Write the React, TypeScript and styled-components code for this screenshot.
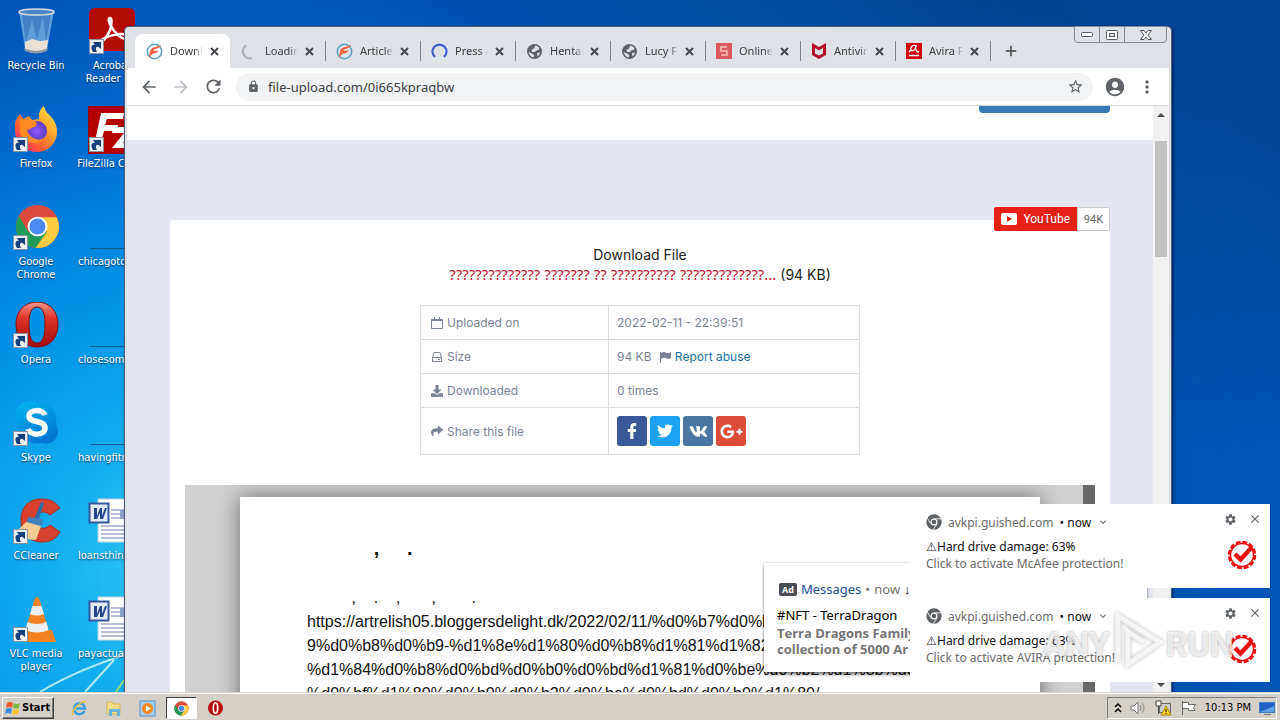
import React from "react";
import styled, { createGlobalStyle } from "styled-components";
import { MdArrowBack, MdArrowForward, MdRefresh, MdLock, MdStarOutline, MdAccountCircle, MdMoreVert, MdSettings, MdClose, MdExpandMore, MdAdd } from "react-icons/md";
import { FaFacebookF, FaTwitter, FaVk, FaShare, FaDownload, FaGooglePlusG } from "react-icons/fa";

const ui = '"DejaVu Sans Condensed", "DejaVu Sans", sans-serif';
const chromeUi = '"Noto Sans", "Open Sans", sans-serif';

const GlobalStyle = createGlobalStyle`
  * { box-sizing: border-box; }
  body { margin: 0; font-family: ${chromeUi}; }
  button { margin: 0; padding: 0; border: 0; background: none; color: inherit; font: inherit; }
  svg { display: block; flex: none; }
  a { text-decoration: none; }
`;

const Screen = styled.div`
  height: 100vh;
  display: flex;
  flex-direction: column;
  overflow: hidden;
`;

const Desktop = styled.main`
  position: relative;
  flex: 1;
  min-height: 0;
  overflow: hidden;
  background:
    linear-gradient(30deg, transparent 65%, rgba(0, 40, 80, 0.35) 90%),
    radial-gradient(circle at 190px 570px, #36cdf4 0, #12adee 140px, #0090e6 300px, #0068cc 460px, #0050b0 620px, #0059b4 760px, #0052ae 960px, #0057ba 1120px);
`;

const Rays = styled.svg`
  position: absolute;
  left: 0;
  bottom: 0;
`;

const IconGrid = styled.div`
  position: relative;
  display: grid;
  grid-template-rows: repeat(7, 98px);
  grid-auto-columns: 72px;
  grid-auto-flow: column;
  column-gap: 4px;
`;

const Shortcut = styled.button<{ $long?: boolean }>`
  display: flex;
  flex-direction: column;
  align-items: center;
  justify-content: flex-start;
  padding-top: 8px;
  gap: 3px;
  color: #fff;
  font: 11px/13px ${ui};
  text-shadow: 0 1px 2px #00305c;
  span {
    width: 100%;
    padding-left: ${(p) => (p.$long ? "2px" : "0")};
    text-align: ${(p) => (p.$long ? "left" : "center")};
    white-space: pre;
  }
`;

const Window = styled.section`
  position: absolute;
  left: 124px;
  right: 108px;
  top: 26px;
  bottom: 0;
  display: flex;
  flex-direction: column;
  border: solid #52617f;
  border-width: 1px 1px 0;
  border-radius: 5px 5px 0 0;
  background: #dee1e6;
  padding: 0 2px;
  box-shadow: 1px 1px 3px rgba(0, 10, 50, 0.7);
`;

const TabStrip = styled.div`
  display: flex;
  height: 41px;
  padding: 7px 0 0 8px;
`;

const Tab = styled.div<{ $active?: boolean }>`
  width: 95px;
  display: flex;
  align-items: center;
  padding: 0 9px 0 11px;
  border-radius: 8px 8px 0 0;
  background: ${(p) => (p.$active ? "#fff" : "transparent")};
`;

const TabTitle = styled.button`
  flex: 1;
  min-width: 0;
  margin-left: 7px;
  overflow: hidden;
  text-align: left;
  white-space: nowrap;
  font-size: 11px;
  line-height: 16px;
  color: #3c4043;
  mask-image: linear-gradient(90deg, #000 75%, transparent);
`;

const TabClose = styled.button`
  width: 14px;
  height: 14px;
  margin-left: 4px;
  display: grid;
  place-items: center;
  color: #45494d;
`;

const Divider = styled.i`
  width: 1px;
  height: 20px;
  margin: 7px -1px 0 0;
  background: #80868b;
`;

const NewTab = styled.button`
  width: 42px;
  display: grid;
  place-items: center;
  color: #3c4043;
`;

const Caption = styled.div`
  position: absolute;
  right: 4px;
  top: -1px;
  display: flex;
  border: 1px solid #858c98;
  border-radius: 0 0 4px 4px;
  button {
    width: 25px;
    height: 15px;
    display: grid;
    place-items: center;
    border-right: 1px solid #858c98;
  }
  button:last-child { width: 41px; border: 0; }
`;

const Toolbar = styled.form`
  display: flex;
  align-items: center;
  height: 38px;
  padding: 0 6px;
  background: #fff;
  border-bottom: 1px solid #d5d8dc;
  color: #5f6368;
`;

const ToolButton = styled.button`
  width: 32px;
  height: 28px;
  display: grid;
  place-items: center;
`;

const Omnibox = styled.label`
  flex: 1;
  display: flex;
  align-items: center;
  height: 28px;
  margin: 0 6px 0 7px;
  padding: 0 9px 0 11px;
  border-radius: 14px;
  background: #f1f3f4;
`;

const Address = styled.input`
  flex: 1;
  min-width: 0;
  margin-left: 8px;
  padding: 0;
  border: 0;
  outline: 0;
  font: 13px/20px ${chromeUi};
  color: #3c4043;
  background: none;
`;

const Viewport = styled.div`
  flex: 1;
  min-height: 0;
  display: flex;
  overflow: hidden;
  background: #fff;
`;

const Page = styled.div`
  position: relative;
  flex: 1;
  min-width: 0;
  overflow: hidden;
  background: #e4e7f2;
  font-family: Inter, "Open Sans", sans-serif;
`;

const Scrollbar = styled.div`
  width: 16px;
  display: flex;
  flex-direction: column;
  align-items: center;
  padding: 7px 0 5px;
  background: #f1f1f1;
`;

const Thumb = styled.div`
  width: 12px;
  height: 116px;
  margin: 24px 0 auto;
  background: #c1c1c1;
`;

const SiteHeader = styled.header`
  height: 34px;
  background: #fff;
`;

const Center = styled.div`
  width: 100%;
  max-width: 940px;
  margin: 0 auto;
`;

const UploadButton = styled.button`
  display: block;
  width: 131px;
  height: 7px;
  margin-left: auto;
  border-radius: 0 0 4px 4px;
  background: #337ab7;
`;

const Card = styled.article`
  position: relative;
  max-width: 940px;
  margin: 80px auto 0;
  padding: 25px 15px 0;
  border-radius: 3px;
  background: #fff;
`;

const YouTube = styled.div`
  position: absolute;
  right: 0;
  top: -13px;
  height: 24px;
  display: flex;
  border-radius: 2px;
  overflow: hidden;
  font: 12px/24px Roboto, sans-serif;
  a {
    display: flex;
    align-items: center;
    gap: 6px;
    padding: 0 7px;
    background: #e62117;
    color: #fff;
  }
  span {
    width: 33px;
    border: 1px solid #ccc;
    background: #fff;
    color: #666;
    font-size: 11px;
    line-height: 23px;
    text-align: center;
  }
`;

const Title = styled.h1`
  margin: 0 0 20px;
  font-size: 14px;
  font-weight: 400;
  line-height: 20px;
  text-align: center;
  color: #222;
`;

const FileName = styled.span`
  font: 15px/1 "Noto Sans", sans-serif;
  color: #c8102e;
`;

const Info = styled.table`
  width: 440px;
  margin: 0 auto 30px;
  border-collapse: collapse;
  font-size: 12px;
  line-height: 17px;
  color: #7b8398;
  th, td {
    padding: 8px;
    border: 1px solid #ddd;
    font-weight: 400;
    text-align: left;
  }
  th { width: 188px; padding-left: 10px; }
  a { color: #1b6f9f; }
`;

const Line = styled.div`
  display: flex;
  align-items: center;
  gap: 4px;
`;

const ShareRow = styled.div`
  display: flex;
  gap: 3px;
`;

const Share = styled.button<{ $color: string }>`
  width: 30px;
  height: 30px;
  display: grid;
  place-items: center;
  border-radius: 3px;
  background: ${(p) => p.$color};
  color: #fff;
`;

const Viewer = styled.div`
  position: relative;
  padding-top: 12px;
  background: #d1d1d1;
  overflow: hidden;
`;

const ViewerBar = styled.div`
  position: absolute;
  right: 0;
  top: 0;
  bottom: 0;
  width: 12px;
  background: #686868;
`;

const Paper = styled.div`
  max-width: 800px;
  height: 1000px;
  margin: 0 auto;
  padding: 39px 67px;
  background: #fff;
  box-shadow: 0 0 20px rgba(0, 0, 0, 0.5);
  font: 16px/24px "Liberation Sans", Arial, sans-serif;
  color: #111;
  white-space: pre;
  p { margin: 0; }
`;

const Heading = styled.p`
  font-size: 20px;
  font-weight: 700;
  && { padding-bottom: 26px; }
`;

const AdCard = styled.aside`
  position: absolute;
  right: 6px;
  bottom: 20px;
  width: 383px;
  height: 109px;
  padding: 16px 13px;
  background: #fff;
  box-shadow: 0 3px 4px -1px rgba(0, 0, 0, 0.6), 0 0 2px rgba(0, 0, 0, 0.25);
  font: 13px/16px "Noto Sans", sans-serif;
  color: #000;
  white-space: nowrap;
  strong { display: block; padding-top: 2px; color: #757575; font-family: "Open Sans", sans-serif; }
`;

const AdTop = styled.div`
  display: flex;
  align-items: center;
  gap: 4px;
  height: 20px;
  margin-bottom: 8px;
  color: #757575;
  a { color: #1a4f91; }
  b { padding: 0 3px; margin-left: 2px; border-radius: 2px; background: #4a4d55; color: #fff; font-size: 9px; line-height: 13px; }
  i { font-style: normal; color: #000; }
`;

const Notifications = styled.div`
  position: absolute;
  right: 10px;
  bottom: 10px;
  width: 360px;
  display: flex;
  flex-direction: column;
  gap: 10px;
`;

const Notice = styled.section`
  display: flex;
  height: 84px;
  padding: 8px 8px 0 16px;
  background: #fff;
  font: 12px/17px "Noto Sans", sans-serif;
  color: #6b6b6b;
`;

const NoticeText = styled.div`
  flex: 1;
  p { margin: 0; }
`;

const Source = styled.div`
  display: flex;
  align-items: center;
  gap: 6px;
  height: 20px;
  margin-bottom: 6px;
`;

const Dark = styled.span`
  color: #111;
`;

const NoticeSide = styled.div`
  width: 40px;
  display: flex;
  flex-direction: column;
  align-items: center;
  gap: 14px;
`;

const NoticeButtons = styled.div`
  display: flex;
  gap: 11px;
  align-self: flex-end;
  color: #5f6368;
`;

const Watermark = styled.div`
  position: absolute;
  right: 46px;
  bottom: 16px;
  display: flex;
  align-items: center;
  font: 700 34px/64px Roboto, sans-serif;
  color: rgba(255, 255, 255, 0.75);
  text-shadow: 0 0 3px rgba(0, 0, 0, 0.35);
  pointer-events: none;
  svg { filter: drop-shadow(0 0 2px rgba(0, 0, 0, 0.35)); }
`;

const Taskbar = styled.footer`
  display: flex;
  align-items: center;
  height: 28px;
  padding: 3px 3px 0 2px;
  border-top: 1px solid #d4d0c8;
  box-shadow: inset 0 1px #fff;
  background: #d4cfc7;
`;

const Start = styled.button`
  display: flex;
  align-items: center;
  gap: 1px;
  width: 52px;
  height: 22px;
  margin-right: 10px;
  padding-left: 2px;
  border: 1px solid;
  border-color: #fff #404040 #404040 #fff;
  box-shadow: inset -1px -1px #808080;
  font: 700 11px/18px ${ui};
  color: #000;
`;

const Task = styled.button<{ $active?: boolean }>`
  width: 31px;
  height: 22px;
  margin-right: 3px;
  display: grid;
  place-items: center;
  border: 1px solid;
  border-color: ${(p) => (p.$active ? "#404040 #fff #fff #404040" : "transparent")};
  background: ${(p) => (p.$active ? "#fff" : "none")};
`;

const Tray = styled.div`
  display: flex;
  align-items: center;
  gap: 8px;
  height: 22px;
  margin-left: auto;
  padding: 0 1px 0 6px;
  border: 1px solid;
  border-color: #808080 #fff #fff #808080;
  font: 11px/18px ${ui};
  color: #000;
`;

const ShortcutArrow = () => (
  <g>
    <rect x="1.5" y="31.5" width="14" height="14" fill="#e9eef5" stroke="#8a94a5" />
    <path d="M5 44 C2 39 4 36 7 37 L5 34 L13 34 L13 41 L10.500 39 C8 38 7 41 9 44 Z" fill="#173f7c" />
  </g>
);

const ChromeLogo = ({ size = 16, mono = false }: { size?: number; mono?: boolean }) => (
  <svg width={size} height={size} viewBox="0 0 48 48">
    <circle cx="24" cy="24" r="23" fill={mono ? "#5f6368" : "#dd4b3e"} />
    {!mono && <path d="M4.1 12.5 A23 23 0 0 0 22 46.900 L34 29.5 L24 34 L14 29.5 Z" fill="#1f9d57" />}
    {!mono && <path d="M44.5 14 H24 L34 29.5 L22 46.900 A23 23 0 0 0 44.5 14 Z" fill="#ffcd41" />}
    {mono && <path d="M4 12 L14.5 29.5 M45 14.5 H24 M22 47 L33 29.5" stroke="#fff" strokeWidth="2.5" />}
    <circle cx="24" cy="24" r="10.5" fill="#fff" />
    <circle cx="24" cy="24" r={mono ? 7 : 8.5} fill={mono ? "#5f6368" : "#4a8af4"} />
  </svg>
);

const Pic = ({ children, arrow = true }: { children?: React.ReactNode; arrow?: boolean }) => (
  <svg width="48" height="48" viewBox="0 0 48 48">
    {children}
    {arrow && <ShortcutArrow />}
  </svg>
);

const BinIcon = () => (
  <Pic arrow={false}>
    <path d="M7 3 L13 41 Q24 47 35 41 L42 3 Z" fill="#7db4e4" opacity="0.75" />
    <path d="M10 6 L14 34 L20 12 L25 32 L31 8 L34 34 L39 6" fill="#2d6fb8" opacity="0.6" />
    <path d="M13 34 L20 31 L28 33 L36 32 L35 41 Q24 47 13 41 Z" fill="#e7dfd4" />
    <path d="M12 40 Q24 46 36 40 L35 43 Q24 48 13 43 Z" fill="#8d99a5" />
    <ellipse cx="24.5" cy="4" rx="17.5" ry="3" fill="#4a87c4" stroke="#d5dde5" strokeWidth="1.5" />
  </Pic>
);

const FirefoxIcon = () => (
  <Pic>
    <defs>
      <linearGradient id="fx" x1="1" y1="0" x2="0.1" y2="1">
        <stop offset="0" stopColor="#fff14a" /><stop offset="0.4" stopColor="#ffa52a" /><stop offset="0.7" stopColor="#ff5a36" /><stop offset="1" stopColor="#e8257a" />
      </linearGradient>
      <radialGradient id="fxc"><stop offset="0" stopColor="#9059ff" /><stop offset="1" stopColor="#5b3cc4" /></radialGradient>
    </defs>
    <path d="M3 25 C2 18 4 12 8 8 L11 13 L17 10 L20 14 L27 13 C26 8 28 3 32 0 C33 6 37 8 41 13 C51 28 41 46 25 46 C13 46 4 38 3 25 Z" fill="url(#fx)" />
    <circle cx="25" cy="25" r="10" fill="url(#fxc)" />
    <path d="M8 13 L20 14 C26 15 26 20 22 21 C18 22 18 24 15 24 C18 33 27 36 34 31 C29 40 13 39 8 27 Z" fill="#ff8a24" />
  </Pic>
);

const OperaIcon = () => (
  <Pic>
    <defs><linearGradient id="op" x1="0" y1="0" x2="0" y2="1"><stop offset="0" stopColor="#f29a90" /><stop offset="0.35" stopColor="#df3327" /><stop offset="1" stopColor="#a20b08" /></linearGradient></defs>
    <path fillRule="evenodd" d="M25 0 C12 0 4 10 4 22 C4 36 12 45 25 45 C38 45 46 36 46 22 C46 10 38 0 25 0 Z M25 5 C31 5 33 12 33 22 C33 34 31 41 25 41 C19 41 17 34 17 22 C17 12 19 5 25 5 Z" fill="url(#op)" stroke="#8b0d08" />
  </Pic>
);

const SkypeIcon = () => (
  <Pic>
    <defs><linearGradient id="sk" x1="0" y1="0" x2="0.5" y2="1"><stop offset="0" stopColor="#00b8ee" /><stop offset="1" stopColor="#0078d2" /></linearGradient></defs>
    <path d="M14 2 C20 0 22 3 27 3 C39 3 46 12 44 24 C50 34 42 47 30 43 C14 46 3 34 5 20 C1 12 7 3 14 2 Z" fill="url(#sk)" />
    <path d="M33 15 C31 9 17 9 17 16 C17 24 33 19 33 28 C33 36 18 36 16 29" fill="none" stroke="#fff" strokeWidth="5.5" />
  </Pic>
);

const CCleanerIcon = () => (
  <Pic>
    <path d="M48 10 C42 2 36 1 29 1 C16 1 9 10 9 22 C9 36 18 44 30 44 C38 44 44 41 48 34 L38 27 C33 33 23 31 23 22 C23 13 33 12 38 17 Z" fill="#d8412f" stroke="#a83022" />
    <path d="M29 4 L32 5 L26 24 L22 22 Z" fill="#2d6da8" />
    <path d="M16 19 L31 21 L30 28 L15 25 Z" fill="#3f83be" />
    <path d="M14 24 L29 28 L24 42 Q12 42 4 34 Z" fill="#f5cd93" />
  </Pic>
);

const VlcIcon = () => (
  <Pic>
    <path d="M10 34 H40 L44 46 H14 Z" fill="#f58220" />
    <path d="M23 2 Q25 0 27 2 L38 39 Q25 46 12 39 Z" fill="#f58220" />
    <path d="M20.5 10 H29.5 L32 18 Q25 21 18 18 Z M15.5 26 Q25 30 34.5 26 L36.5 34 Q25 39 13.5 34 Z" fill="#eceff1" />
  </Pic>
);

const AcrobatIcon = () => (
  <Pic>
    <rect x="1" y="0" width="46" height="43" rx="6" fill="#b30b00" />
    <path d="M22 10 C18 11 24 22 31 28 C37 33 42 30 38 27 C32 24 16 29 12 33 C11 37 18 32 22 22 C24 15 24 10 22 10 Z" fill="none" stroke="#fff" strokeWidth="2.5" />
  </Pic>
);

const FileZillaIcon = () => (
  <Pic>
    <rect width="48" height="48" fill="#b50000" stroke="#7b1010" strokeWidth="2" strokeDasharray="3 2" />
    <path d="M13 7 H36 L35 13 H19 L17 19 H30 L29 25 H16 L12 40 H6 Z M25 21 H46 L35 37 H46 V42 H24 L36 27 H24 Z" fill="#fff" />
  </Pic>
);

const WordIcon = () => (
  <Pic arrow={false}>
    <path d="M10 1 H47 V44 H10 Z" fill="#fff" stroke="#c6d0de" />
    <path d="M23 12 H45 M23 16 H45 M23 20 H45 M13 28 H45 M13 32 H45 M13 36 H45 M13 40 H45" stroke="#6c7ba8" />
    <rect x="32" y="12" width="12" height="9" fill="#8da2c9" />
    <rect x="1.5" y="5.5" width="19" height="19" fill="#e3ebf8" stroke="#33569d" strokeWidth="2" />
    <path d="M4 10 H9 L9 18 L12 10 H14 L14 18 L17 10 H19 L15 21 H12 L12 15 L9 21 H6 L6 10 Z" fill="#25468f" />
  </Pic>
);

const BlankIcon = () => <Pic arrow={false}><path d="M2 44.5 H48" stroke="#0b5a8c" /></Pic>;

const UploadMark = () => (
  <svg width="17" height="17" viewBox="0 0 17 17">
    <circle cx="8.5" cy="8.5" r="7.2" fill="none" stroke="#5a9fc4" strokeWidth="1.5" />
    <path d="M2.500 15.500 L4.500 7 Q5.500 4.500 9 4 L15.500 2 Q14 5 11 5.500 L8 6.500 L7.500 8 L12.500 7.500 Q11 10.500 7 10.500 Q5 12 2.500 15.500 Z" fill="#f4603f" />
  </svg>
);

const LoadMark = ({ color, blue }: { color: string; blue?: boolean }) => (
  <svg width="17" height="17" viewBox="0 0 17 17">
    <path d={blue ? "M4 14 A7 7 0 1 1 13 14" : "M5 2.5 A7 7 0 0 0 11 15"} fill="none" stroke={color} strokeWidth="2.2" />
  </svg>
);

const GlobeMark = () => (
  <svg width="17" height="17" viewBox="0 0 17 17">
    <circle cx="8.5" cy="8.5" r="7.5" fill="#5f6368" />
    <path d="M9.500 2.500 Q12 3 13.500 5 L12.500 7 L10 7.500 L9 9 H6 L5.500 7 L8 5.500 Z M2.500 9 L6 10.500 L8 12 V14.500 Q4 14 2.500 9 Z M11 10 L14 9.500 Q13.500 12 11.500 13.500 Z" fill="#dee1e6" />
  </svg>
);

const SquareMark = () => (
  <svg width="16" height="16" viewBox="0 0 16 16">
    <rect width="16" height="16" fill="#dc5964" />
    <path d="M11 4 H5 V8 H11 V12 H5" fill="none" stroke="#f5a6a6" strokeWidth="2" />
  </svg>
);

const McAfeeMark = () => (
  <svg width="16" height="16" viewBox="0 0 16 16">
    <path d="M1 0 L8 4 L15 0 V12 L8 16 L1 12 Z M4 5 V10.5 L8 12.5 L12 10.5 V5 L8 7.5 Z" fill="#b3122d" fillRule="evenodd" />
  </svg>
);

const AviraMark = () => (
  <svg width="16" height="16" viewBox="0 0 16 16">
    <rect width="16" height="16" fill="#d5000f" />
    <path d="M11 3 C6 1 4 5 5 7 C7 9 10 6 10 3 C9 6 10 9 13 9 M3 9 L5 7 M3 12.5 H13" stroke="#fff" strokeWidth="1.3" fill="none" />
  </svg>
);

const Badge = () => (
  <svg width="30" height="30" viewBox="0 0 30 30">
    <circle cx="15" cy="15" r="13" fill="none" stroke="#ee1010" strokeWidth="2.500" strokeDasharray="5 1.8" />
    <circle cx="15" cy="15" r="11.500" fill="none" stroke="#ee1010" strokeWidth="1.500" />
    <path d="M8 14 L13.5 19.5 L25 7" fill="none" stroke="#ee1010" strokeWidth="4.5" />
  </svg>
);

const tabs = [
  { title: "Downl", icon: <UploadMark />, active: true },
  { title: "Loadin", icon: <LoadMark color="#a9adb3" /> },
  { title: "Article", icon: <UploadMark /> },
  { title: "Press a", icon: <LoadMark color="#3f5fd8" blue /> },
  { title: "Hentai", icon: <GlobeMark /> },
  { title: "Lucy F", icon: <GlobeMark /> },
  { title: "Online", icon: <SquareMark /> },
  { title: "Antivir", icon: <McAfeeMark /> },
  { title: "Avira F", icon: <AviraMark /> },
];

const shortcuts = [
  { name: "Recycle Bin", icon: <BinIcon /> },
  { name: "Firefox", icon: <FirefoxIcon /> },
  { name: "Google\nChrome", icon: <Pic><svg x="3" y="0" width="45" height="45"><ChromeLogo size={45} /></svg></Pic> },
  { name: "Opera", icon: <OperaIcon /> },
  { name: "Skype", icon: <SkypeIcon /> },
  { name: "CCleaner", icon: <CCleanerIcon /> },
  { name: "VLC media\nplayer", icon: <VlcIcon /> },
  { name: "Acrobat\nReader DC", icon: <AcrobatIcon /> },
  { name: "FileZilla Client", icon: <FileZillaIcon /> },
  { name: "chicagoto", icon: <BlankIcon />, long: true },
  { name: "closesome", icon: <BlankIcon />, long: true },
  { name: "havingfitn", icon: <BlankIcon />, long: true },
  { name: "loansthing", icon: <WordIcon />, long: true },
  { name: "payactual", icon: <WordIcon />, long: true },
];

const notices = ["Click to activate McAfee protection!", "Click to activate AVIRA protection!"];

const Glyph = ({ children }: { children: React.ReactNode }) => (
  <svg width="12" height="12" viewBox="0 0 12 12" fill="none" stroke="#7b8398">{children}</svg>
);

export default function App() {
  return (
    <Screen>
      <GlobalStyle />
      <Desktop>
        <Rays width="140" height="60" viewBox="0 0 140 60">
          <path d="M40 60 C70 42 100 30 140 18 M85 60 L114 28" stroke="#d8fbff" strokeWidth="2" fill="none" opacity="0.8" />
          <path d="M116 60 L124 48" stroke="#8fe07a" strokeWidth="2" />
        </Rays>
        <IconGrid>
          {shortcuts.map((s) => (
            <Shortcut key={s.name} $long={s.long}>{s.icon}<span>{s.name}</span></Shortcut>
          ))}
        </IconGrid>

        <Window>
          <Caption>
            <button aria-label="Minimize"><svg width="12" height="5"><rect x="0.5" y="0.5" width="11" height="4" rx="1" fill="#fff" stroke="#555b66" /></svg></button>
            <button aria-label="Maximize"><svg width="12" height="10"><rect x="0.5" y="0.5" width="11" height="9" rx="1" fill="#fff" stroke="#555b66" /><rect x="3.5" y="3.5" width="5" height="3" fill="#dee1e6" stroke="#555b66" /></svg></button>
            <button aria-label="Close"><svg width="12" height="10" viewBox="0 0 12 10"><path d="M0.5 0.5 H4 L6 3 L8 0.5 H11.5 L8 5 L11.5 9.5 H8 L6 7 L4 9.5 H0.5 L4 5 Z" fill="#fff" stroke="#555b66" /></svg></button>
          </Caption>
          <TabStrip>
            {tabs.map((t, i) => (
              <React.Fragment key={t.title}>
                <Tab $active={t.active}>
                  {t.icon}
                  <TabTitle>{t.title}</TabTitle>
                  <TabClose aria-label={`Close ${t.title}`}><svg width="9" height="9"><path d="M1 1 L8 8 M8 1 L1 8" stroke="currentColor" strokeWidth="2" /></svg></TabClose>
                </Tab>
                {i > 0 && <Divider />}
              </React.Fragment>
            ))}
            <NewTab aria-label="New tab"><MdAdd size={18} /></NewTab>
          </TabStrip>
          <Toolbar onSubmit={(e) => e.preventDefault()}>
            <ToolButton type="button" aria-label="Back"><MdArrowBack size={20} /></ToolButton>
            <ToolButton type="button" aria-label="Forward"><MdArrowForward size={20} color="#bdc1c6" /></ToolButton>
            <ToolButton type="button" aria-label="Reload"><MdRefresh size={21} /></ToolButton>
            <Omnibox>
              <MdLock size={13} />
              <Address aria-label="Address" defaultValue="file-upload.com/0i665kpraqbw" />
              <MdStarOutline size={17} />
            </Omnibox>
            <ToolButton type="button" aria-label="Profile"><MdAccountCircle size={22} /></ToolButton>
            <ToolButton type="button" aria-label="Menu"><MdMoreVert size={20} /></ToolButton>
          </Toolbar>
          <Viewport>
            <Page>
              <SiteHeader><Center><UploadButton aria-label="Upload" /></Center></SiteHeader>
              <Card>
                <YouTube>
                  <a href="#youtube">
                    <svg width="16" height="12" viewBox="0 0 16 12"><rect width="16" height="12" rx="2" fill="#fff" /><path d="M6 3 L11 6 L6 9 Z" fill="#e62117" /></svg>
                    YouTube
                  </a>
                  <span>94K</span>
                </YouTube>
                <Title>
                  Download File<br />
                  <FileName>?????????????? ??????? ?? ?????????? ?????????????...</FileName> (94 KB)
                </Title>
                <Info>
                  <tbody>
                    <tr>
                      <th scope="row"><Line><Glyph><path d="M0.5 2.5 H11.5 V11.5 H0.5 Z M0.5 3.5 H11.5 M3.5 0 V3 M8.5 0 V3" /></Glyph>Uploaded on</Line></th>
                      <td>2022-02-11 - 22:39:51</td>
                    </tr>
                    <tr>
                      <th scope="row"><Line><Glyph><path d="M1.5 6.5 L3 1.5 H9 L10.5 6.5 V10.5 H1.5 Z M1.5 6.5 H10.5 M7 8.5 H9" /></Glyph>Size</Line></th>
                      <td><Line>94 KB&nbsp;<Glyph><path d="M1.5 1 V12" /><path d="M2 2 Q5 0 7 2 Q9 3 12 1 V7 Q9 9 7 7 Q5 6 2 8 Z" fill="#7b8398" stroke="none" /></Glyph><a href="#report">Report abuse</a></Line></td>
                    </tr>
                    <tr>
                      <th scope="row"><Line><FaDownload size={12} />Downloaded</Line></th>
                      <td>0 times</td>
                    </tr>
                    <tr>
                      <th scope="row"><Line><FaShare size={12} />Share this file</Line></th>
                      <td>
                        <ShareRow>
                          <Share $color="#3b5998" aria-label="Facebook"><FaFacebookF size={16} /></Share>
                          <Share $color="#1da1f2" aria-label="Twitter"><FaTwitter size={16} /></Share>
                          <Share $color="#4c75a3" aria-label="VK"><FaVk size={19} /></Share>
                          <Share $color="#dd4b39" aria-label="Google Plus"><FaGooglePlusG size={23} /></Share>
                        </ShareRow>
                      </td>
                    </tr>
                  </tbody>
                </Info>
                <Viewer>
                  <Paper>
                    <Heading>{"            ,     ."}</Heading>
                    <p>{"          ,    .    ,       ,        ."}</p>
                    <p>https://artrelish05.bloggersdelight.dk/2022/02/11/%d0%b7%d0%b0%d0</p>
                    <p>9%d0%b8%d0%b9-%d1%8e%d1%80%d0%b8%d1%81%d1%82%d0</p>
                    <p>%d1%84%d0%b8%d0%bd%d0%b0%d0%bd%d1%81%d0%be%d0%b2%d1%8b%d0</p>
                    <p>%d0%bf%d1%80%d0%b0%d0%b2%d0%be%d0%bd%d0%b0%d1%80/</p>
                  </Paper>
                  <ViewerBar />
                </Viewer>
              </Card>
              <AdCard>
                <AdTop><b>Ad</b><a href="#messages">Messages</a><span>•</span><span>now</span><i>↓</i></AdTop>
                #NFT - TerraDragon
                <strong>Terra Dragons Family<br />collection of 5000 Ar</strong>
              </AdCard>
            </Page>
            <Scrollbar>
              <svg width="8" height="4"><path d="M0 4 L4 0 L8 4 Z" fill="#505050" /></svg>
              <Thumb />
              <svg width="8" height="4"><path d="M0 0 L4 4 L8 0 Z" fill="#505050" /></svg>
            </Scrollbar>
          </Viewport>
        </Window>

        <Notifications>
          {notices.map((text) => (
            <Notice key={text}>
              <NoticeText>
                <Source><ChromeLogo mono /><span>avkpi.guished.com</span><Dark>• now</Dark><MdExpandMore size={12} /></Source>
                <p><Dark>⚠Hard drive damage: 63%</Dark></p>
                <p>{text}</p>
              </NoticeText>
              <NoticeSide>
                <NoticeButtons>
                  <button aria-label="Settings"><MdSettings size={13} /></button>
                  <button aria-label="Dismiss"><MdClose size={14} /></button>
                </NoticeButtons>
                <Badge />
              </NoticeSide>
            </Notice>
          ))}
        </Notifications>
        <Watermark>
          <span>ANY</span>
          <svg width="56" height="64" viewBox="0 0 56 64"><path d="M8 50 V4 L50 30 L18 52 V20 L34 30" fill="none" stroke="#fff" strokeOpacity="0.8" strokeWidth="5" /></svg>
          <span>RUN</span>
        </Watermark>
      </Desktop>

      <Taskbar>
        <Start>
          <svg width="16" height="16" viewBox="0 0 16 16"><path d="M2 3 Q5 1 8 3 L7 8 Q4 6 1 8 Z" fill="#e85a2a" /><path d="M9 3 Q12 5 15 3 L14 8 Q11 9 8 8 Z" fill="#7bb83c" /><path d="M1 9 Q4 7 7 9 L6 14 Q3 12 0 14 Z" fill="#3b8ede" /><path d="M8 9 Q11 10 14 9 L13 14 Q10 15 7 14 Z" fill="#f7c32e" /></svg>
          Start
        </Start>
        <Task aria-label="Internet Explorer"><svg width="17" height="17" viewBox="0 0 17 17"><path d="M13.5 11 A5.5 5.5 0 1 1 14 8.5 H5" fill="none" stroke="#3aa0e0" strokeWidth="2.5" /><path d="M2 15 C-1 12 10 0 15 2" fill="none" stroke="#eac04a" strokeWidth="1.5" /></svg></Task>
        <Task aria-label="Explorer"><svg width="17" height="17" viewBox="0 0 17 17"><path d="M2 2 H7 L8 4 H15 V14 H2 Z" fill="#f4dc8c" stroke="#d5b55a" /><path d="M4 16 V9 H15 V16 H12 V12 H7 V16 Z" fill="#6cb4e0" /></svg></Task>
        <Task aria-label="Media Player"><svg width="17" height="17" viewBox="0 0 17 17"><rect x="1" y="1" width="15" height="15" fill="#a9cdec" stroke="#5f95c8" /><circle cx="8.5" cy="8.5" r="5.5" fill="#f58a1f" /><path d="M7 5.5 L12 8.5 L7 11.5 Z" fill="#fff" /></svg></Task>
        <Task $active aria-label="Chrome"><ChromeLogo size={15} /></Task>
        <Task aria-label="Opera"><svg width="15" height="16" viewBox="0 0 15 16"><circle cx="7.5" cy="8" r="7.5" fill="#b3100f" /><ellipse cx="7.5" cy="8" rx="2.2" ry="5.2" fill="none" stroke="#fff" strokeWidth="1.6" /></svg></Task>
        <Tray>
          <svg width="8" height="10"><path d="M1 4 L4 1 L7 4 M1 9 L4 6 L7 9" fill="none" stroke="#000" strokeWidth="1.5" /></svg>
          <svg width="17" height="16" viewBox="0 0 17 16"><path d="M1 6 H4 L8 2 V14 L4 10 H1 Z" fill="#fff" stroke="#777" /><path d="M10 5 Q12 8 10 11 M12 3 Q16 8 12 13" fill="none" stroke="#888" /></svg>
          <svg width="17" height="16" viewBox="0 0 17 16"><rect x="4.5" y="3.5" width="11" height="9" fill="#ccc" stroke="#666" /><path d="M1 1 H6 V6 H1 Z M3.5 6 V14" fill="#fff" stroke="#444" /><path d="M11 6 L16 15 H6 Z" fill="#ffd42a" stroke="#a8860a" /><path d="M11 9 V12 M11 13 V14" stroke="#000" /></svg>
          <svg width="17" height="16" viewBox="0 0 17 16"><path d="M2.5 1 V15 M2.5 2.5 H8.5 V4.5 H15.5 L13.5 7.5 L15 10.5 H8.5 V8.5 H2.5" fill="#fff" stroke="#666" /></svg>
          <time>10:13 PM</time>
          <svg width="16" height="14" viewBox="0 0 16 14"><rect x="0.5" y="1.5" width="15" height="10" fill="#1f62c4" stroke="#3d7cc0" /><path d="M1 11 L15 5 V11 Z" fill="#5fa1e5" /><path d="M5 13.5 H12" stroke="#777" /></svg>
        </Tray>
      </Taskbar>
    </Screen>
  );
}
